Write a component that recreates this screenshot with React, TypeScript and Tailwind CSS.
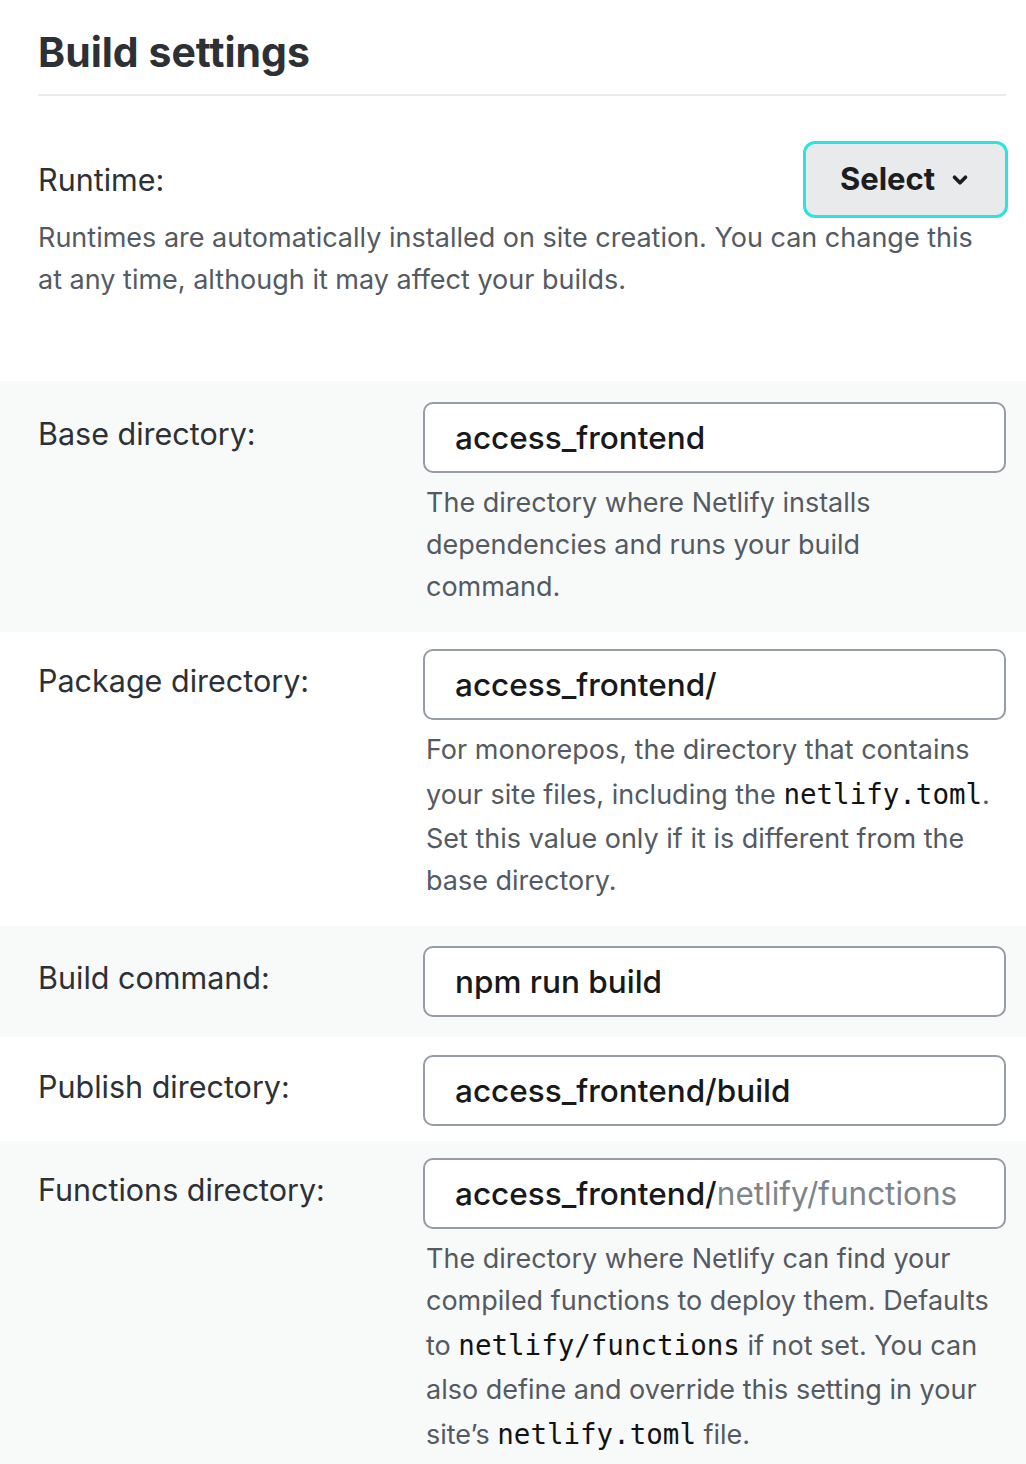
import React from 'react';
import { ChevronDown } from 'lucide-react';

const sans = "font-['Inter','Liberation_Sans',sans-serif]";
const mono = "font-['DejaVu_Sans_Mono','Liberation_Mono',monospace]";

function Code({ children }: { children: React.ReactNode }) {
  return <code className={`${mono} text-[27.5px] text-[#111214] leading-[47px]`}>{children}</code>;
}

function FieldRow({
  label,
  value,
  placeholder,
  help,
  shaded,
  className = '',
}: {
  label: string;
  value: string;
  placeholder?: string;
  help?: React.ReactNode;
  shaded?: boolean;
  className?: string;
}) {
  return (
    <div className={`${shaded ? 'bg-[#f8f9f9]' : 'bg-white'} ${className}`}>
      <div className="flex pl-[38px] pr-[20px]">
        <div className="w-[385px] shrink-0 pt-[11px] text-[30.5px] leading-[42px] text-[#2d3136]">{label}</div>
        <div className="flex-1">
          <div className="flex h-[71px] items-center rounded-[10px] border-2 border-[#959ca5] bg-white px-[30px] text-[31.5px] font-medium text-[#18191b]">
            <span>{value}</span>
            {placeholder && <span className="font-normal text-[#7d848c]">{placeholder}</span>}
          </div>
          {help && (
            <p className="mt-[9px] w-[572px] pl-[3px] text-[27px] leading-[42px] text-[#545a62]">{help}</p>
          )}
        </div>
      </div>
    </div>
  );
}

export default function App() {
  return (
    <div className={`${sans} min-h-screen bg-white`}>
      <div className="px-[38px] pt-[24px]">
        <h1 className="text-[41px] font-bold leading-[56px] text-[#2d3136]">Build settings</h1>
        <div className="mt-[14px] h-[2px] w-[968px] bg-[#e9eaeb]" />
      </div>

      {/* Runtime */}
      <div className="pl-[38px] pr-[18px] pt-[45px] pb-[80px]">
        <div className="flex items-center justify-between">
          <span className="text-[30.5px] text-[#2d3136]">Runtime:</span>
          <button className="flex h-[77px] w-[205px] items-center justify-center gap-[14px] rounded-[12px] border-[3px] border-[#2ee2e0] bg-[#e9eaec] text-[31px] font-bold text-[#1c1d20]">
            Select
            <ChevronDown size={22} strokeWidth={4} />
          </button>
        </div>
        <p className="mt-[-1px] w-[955px] text-[27px] leading-[42px] text-[#545a62]">
          Runtimes are automatically installed on site creation. You can change this at any time, although it may affect your builds.
        </p>
      </div>

      <FieldRow
        shaded
        className="pt-[21px] pb-[24px]"
        label="Base directory:"
        value="access_frontend"
        help="The directory where Netlify installs dependencies and runs your build command."
      />
      <FieldRow
        className="pt-[17px] pb-[24px]"
        label="Package directory:"
        value="access_frontend/"
        help={
          <>
            For monorepos, the directory that contains your site files, including the <Code>netlify.toml</Code>. Set this value only if it is different from the base directory.
          </>
        }
      />
      <FieldRow shaded className="pt-[20px] pb-[20px]" label="Build command:" value="npm run build" />
      <FieldRow className="pt-[18px] pb-[15px]" label="Publish directory:" value="access_frontend/build" />
      <FieldRow
        shaded
        className="pt-[17px] pb-[20px]"
        label="Functions directory:"
        value="access_frontend/"
        placeholder="netlify/functions"
        help={
          <>
            The directory where Netlify can find your compiled functions to deploy them. Defaults to <Code>netlify/functions</Code> if not set. You can also define and override this setting in your site’s <Code>netlify.toml</Code> file.
          </>
        }
      />
    </div>
  );
}
